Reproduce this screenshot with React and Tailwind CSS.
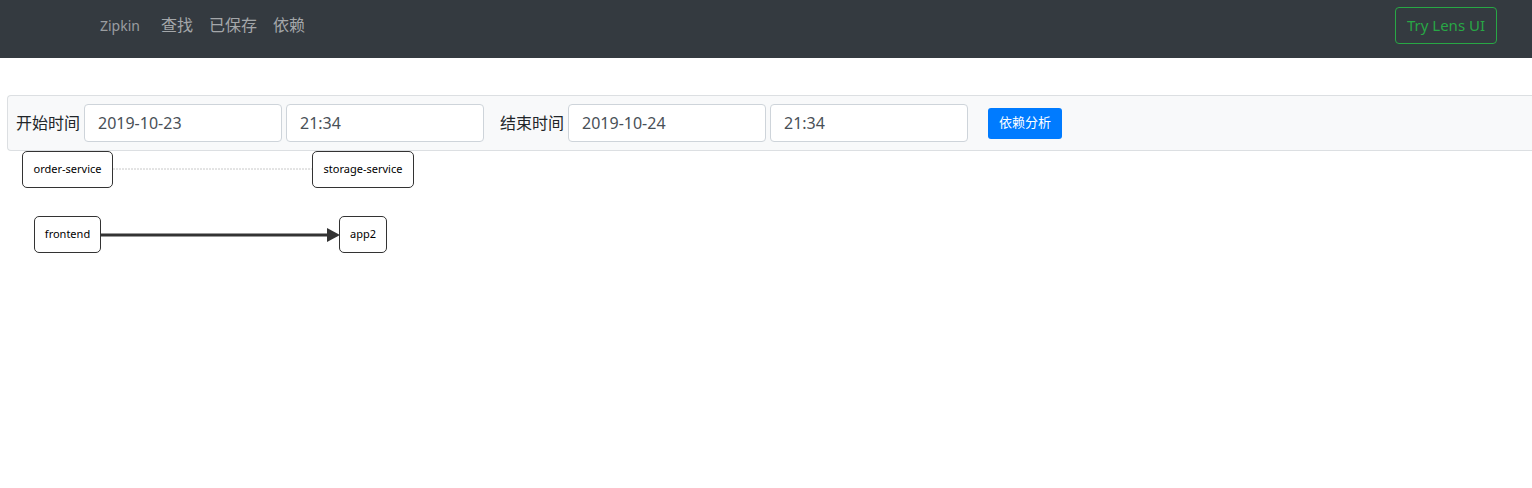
import React from "react";

const font = { fontFamily: '"Noto Sans", "Noto Sans CJK SC", sans-serif' };

function Node({ x, y, w, label }) {
  return (
    <div
      className="absolute flex h-[37px] items-center justify-center rounded-[5px] border border-[#333] bg-white text-[11px] text-black"
      style={{ left: x, top: y, width: w }}
    >
      {label}
    </div>
  );
}

export default function App() {
  return (
    <div className="min-h-[488px] bg-white" style={font}>
      <nav className="flex h-[58px] items-center justify-between bg-[#343a40] pb-[8px] pl-[100px] pr-[35px]">
        <div className="flex items-center">
          <span className="text-[14px] text-[#9a9da0]">Zipkin</span>
          <div className="ml-[21px] flex gap-[16px] text-[16px] text-[#a4a7aa]">
            <span>查找</span>
            <span>已保存</span>
            <span>依赖</span>
          </div>
        </div>
        <button className="h-[37px] w-[102px] rounded-[4px] border border-[#28a745] text-[15px] text-[#28a745]">
          Try Lens UI
        </button>
      </nav>

      <div className="mt-[37px] ml-[7px] flex h-[56px] items-center rounded-l-[4px] border border-r-0 border-[#dcdfe2] bg-[#f8f9fa] pl-[8px]">
        <span className="text-[16px] text-[#212529]">开始时间</span>
        <input
          readOnly
          value="2019-10-23"
          className="ml-[4px] h-[38px] w-[198px] rounded-[4px] border border-[#ced4da] bg-white px-[13px] text-[16px] text-[#495057] outline-none"
        />
        <input
          readOnly
          value="21:34"
          className="ml-[4px] h-[38px] w-[198px] rounded-[4px] border border-[#ced4da] bg-white px-[13px] text-[16px] text-[#495057] outline-none"
        />
        <span className="ml-[16px] text-[16px] text-[#212529]">结束时间</span>
        <input
          readOnly
          value="2019-10-24"
          className="ml-[4px] h-[38px] w-[198px] rounded-[4px] border border-[#ced4da] bg-white px-[13px] text-[16px] text-[#495057] outline-none"
        />
        <input
          readOnly
          value="21:34"
          className="ml-[4px] h-[38px] w-[198px] rounded-[4px] border border-[#ced4da] bg-white px-[13px] text-[16px] text-[#495057] outline-none"
        />
        <button className="ml-[20px] h-[31px] w-[74px] rounded-[3px] bg-[#007bff] text-[13px] text-white">
          依赖分析
        </button>
      </div>

      <div className="relative h-[150px]">
        <svg className="absolute left-0 top-0" width="450" height="150">
          <line x1="113" y1="18" x2="312" y2="18" stroke="#c8c8c8" strokeWidth="1" strokeDasharray="2 1" />
          <line x1="100" y1="84" x2="328" y2="84" stroke="#333" strokeWidth="3" />
          <polygon points="327,77 340,84 327,91" fill="#333" />
        </svg>
        <Node x={22} y={0} w={91} label="order-service" />
        <Node x={312} y={0} w={102} label="storage-service" />
        <Node x={34} y={65} w={67} label="frontend" />
        <Node x={339} y={65} w={48} label="app2" />
      </div>
    </div>
  );
}
